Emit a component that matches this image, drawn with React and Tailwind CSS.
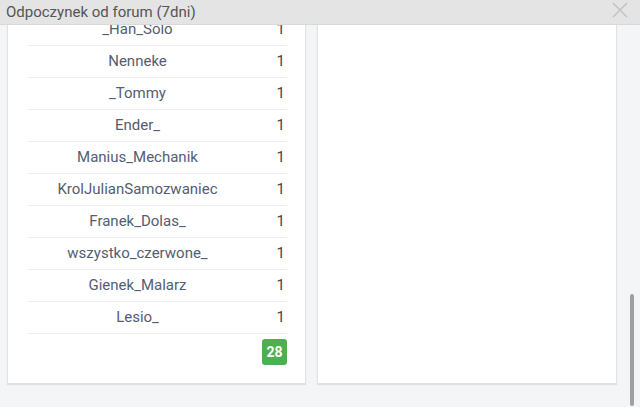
import React from 'react';

const users = [
  '_Han_Solo',
  'Nenneke',
  '_Tommy',
  'Ender_',
  'Manius_Mechanik',
  'KrolJulianSamozwaniec',
  'Franek_Dolas_',
  'wszystko_czerwone_',
  'Gienek_Malarz',
  'Lesio_',
];

const App = () => {
  return (
    <div className="relative w-[640px] h-[407px] overflow-hidden bg-[#f4f5f7]" style={{ fontFamily: 'Roboto, "Liberation Sans", sans-serif' }}>
      {/* modal header */}
      <div className="relative z-10 h-[25px] bg-[#e4e4e4] border-b border-[#d8d8d8] flex items-center justify-between pl-[6px] pr-[12px]">
        <span className="text-[15px] text-[#555] leading-none">Odpoczynek od forum (7dni)</span>
        <svg width="16" height="16" viewBox="0 0 16 16" className="-mt-[4px]">
          <path d="M1 1 L15 15 M15 1 L1 15" stroke="#c4c4c4" strokeWidth="1.6" fill="none" />
        </svg>
      </div>

      <div className="h-[382px] overflow-hidden">
        <div className="flex gap-[11px] pl-[7px] -mt-[12px]">
          {/* left card */}
          <div className="w-[299px] bg-white border border-[#e2e2e2] shadow-[0_1px_1px_rgba(0,0,0,0.08)] pl-[20px] pr-[18px] pb-[18px]">
            {users.map((name) => (
              <div key={name} className="flex h-[32px] items-center border-b border-[#ececec]">
                <div className="flex-1 text-center text-[15px] text-[#545d72]">{name}</div>
                <div className="w-[40px] text-right text-[15px] text-[#444] pr-[2px]">1</div>
              </div>
            ))}
            <div className="flex justify-end mt-[5px]">
              <span className="w-[25px] h-[26px] rounded-[3px] bg-[#4caf50] text-white text-[14px] font-bold flex items-center justify-center">28</span>
            </div>
          </div>

          {/* right card */}
          <div className="w-[300px] bg-white border border-[#e2e2e2] shadow-[0_1px_1px_rgba(0,0,0,0.08)]"></div>
        </div>
      </div>

      {/* scrollbar thumb */}
      <div className="absolute right-[6px] top-[294px] w-[4px] h-[112px] rounded-full bg-[#a0a0a0]"></div>
    </div>
  );
};

export default App;
